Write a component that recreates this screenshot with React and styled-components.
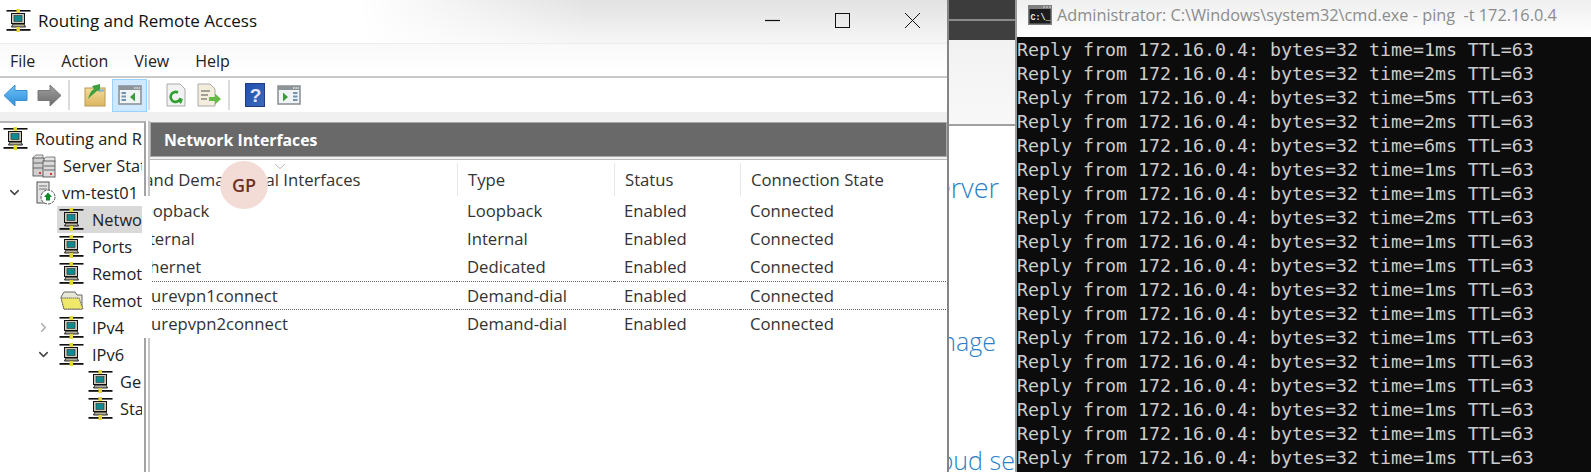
import React from "react";
import styled, { createGlobalStyle } from "styled-components";
import { ChevronDown, ChevronRight } from "lucide-react";

const GlobalStyle = createGlobalStyle`
  html, body {
    margin: 0;
    padding: 0;
    background: #fff;
    overflow: hidden;
  }
  * { box-sizing: border-box; }
`;

const Desktop = styled.div`
  position: relative;
  display: flex;
  width: 1591px;
  height: 472px;
  overflow: hidden;
  font-family: "Open Sans", "Noto Sans", sans-serif;
`;

/* ---------- routing window ---------- */

const RrasWindow = styled.div`
  display: flex;
  flex-direction: column;
  width: 949px;
  flex: none;
  background: #fff;
  border-right: 2px solid #858585;
`;

const TitleBar = styled.div`
  display: flex;
  align-items: center;
  height: 44px;
  flex: none;
  padding-left: 6px;
  padding-bottom: 3px;
  background:
    linear-gradient(90deg, #fff 38%, rgba(255, 255, 255, 0) 62%),
    linear-gradient(180deg, #e2e2e2, #f6f6f6);
  border-bottom: 1px solid #ececec;
`;

const TitleText = styled.div`
  margin-left: 7px;
  font-size: 17px;
  color: #111;
  flex: 1;
`;

const WinButton = styled.div`
  display: flex;
  justify-content: center;
  align-items: center;
  width: 70px;
  height: 38px;
  color: #111;
`;

const MenuBar = styled.div`
  display: flex;
  align-items: center;
  height: 34px;
  flex: none;
  padding: 2px 0 0 10px;
  gap: 26px;
  font-size: 16px;
  color: #222;
  background: linear-gradient(180deg, #f9f9f9, #fff);
  border-bottom: 2px solid #c9c9c9;
`;

const Toolbar = styled.div`
  display: flex;
  align-items: center;
  height: 34px;
  flex: none;
  background: #fff;
`;

const ToolSlot = styled.div`
  display: flex;
  justify-content: center;
  align-items: center;
  width: ${(p) => p.$w}px;
  margin-left: ${(p) => p.$ml || 0}px;
  height: 33px;
  flex: none;
  background: ${(p) => (p.$active ? "#cde8ff" : "transparent")};
  border: 1px solid ${(p) => (p.$active ? "#99d1ff" : "transparent")};
`;

const ToolSep = styled.div`
  width: 2px;
  height: 30px;
  flex: none;
  margin-left: ${(p) => p.$ml}px;
  background: #dcdcdc;
`;

const Band = styled.div`
  height: 9px;
  flex: none;
  background: #f0f0f0;
`;

const Panes = styled.div`
  display: flex;
  flex: 1;
  min-height: 0;
`;

const TreePane = styled.div`
  width: 146px;
  flex: none;
  padding-top: 2px;
  border-top: 2px solid #b5b5b5;
  border-right: 2px solid #a3a3a3;
  overflow: hidden;
`;

const TreeRow = styled.div`
  display: flex;
  align-items: center;
  width: 142px;
  height: 27px;
  padding-left: ${(p) => p.$indent}px;
  overflow: hidden;
  white-space: nowrap;
  font-size: 16.4px;
  color: #222;
  background: ${(p) => (p.$selected ? "linear-gradient(90deg, transparent 57px, #d9d9d9 57px)" : "none")};
`;

const Twisty = styled.span`
  display: flex;
  justify-content: center;
  width: 16px;
  margin-right: ${(p) => p.$mr}px;
  flex: none;
  color: ${(p) => p.$color || "#444"};
`;

const TreeLabel = styled.span`
  margin-left: ${(p) => p.$ml}px;
`;

const Splitter = styled.div`
  width: 4px;
  flex: none;
  background: #fff;
  border-right: 2px solid #c6c6c6;
`;

const DetailPane = styled.div`
  flex: 1;
  min-width: 0;
  display: flex;
  flex-direction: column;
  background: #f0f0f0;
`;

const PaneHeader = styled.div`
  display: flex;
  align-items: center;
  height: 35px;
  flex: none;
  margin-top: 1px;
  padding-left: 13px;
  background: #696969;
  border: 1px solid #a8a8a8;
  color: #fff;
  font-size: 15.8px;
  font-weight: 700;
`;

const ListArea = styled.div`
  flex: 1;
  margin-top: 2px;
  padding-top: 3px;
  background: #fff;
  border-top: 1px solid #b9b9b9;
  overflow: hidden;
`;

const Grid = styled.div`
  display: grid;
  grid-template-columns: 350px 157px 126px 206px;
  margin-left: -43px;
  width: 839px;
  font-size: 16.7px;
  color: #333;
`;

const HeadCell = styled.div`
  position: relative;
  display: flex;
  align-items: center;
  height: 33px;
  padding-left: ${(p) => (p.$first ? 0 : 10)}px;
  border-left: 1px solid ${(p) => (p.$first ? "transparent" : "#e8e8e8")};
  white-space: nowrap;
`;

const SortCaret = styled.svg`
  position: absolute;
  left: 166px;
  top: 0;
`;

const Row = styled.div`
  display: contents;
`;

const Cell = styled.div`
  display: flex;
  align-items: center;
  height: 28.4px;
  padding-left: ${(p) => (p.$first ? 27 : 10)}px;
  white-space: nowrap;
  border-top: ${(p) => (p.$focused ? "1px dotted #666" : "1px solid transparent")};
  border-bottom: ${(p) => (p.$focused ? "1px dotted #666" : "1px solid transparent")};
`;

const WhiteCover = styled.div`
  position: absolute;
  left: 142px;
  top: 196px;
  width: 10px;
  height: 142px;
  background: #fff;
`;

const Badge = styled.div`
  position: absolute;
  left: 220px;
  top: 161px;
  width: 48px;
  height: 48px;
  display: flex;
  align-items: center;
  justify-content: center;
  border-radius: 50%;
  background: #f3dcd6;
  color: #73301f;
  font-size: 18px;
  font-weight: 600;
`;

/* ---------- page behind ---------- */

const BackPage = styled.div`
  width: 66px;
  flex: none;
  display: flex;
  flex-direction: column;
  background: #fff;
  overflow: hidden;
`;

const BackNav = styled.div`
  height: 40px;
  flex: none;
  background: linear-gradient(180deg, #3c3c3c 19px, #8a8a8a 19px, #8a8a8a 21px, #3f3f3f 21px);
`;

const BackHero = styled.div`
  height: 86px;
  flex: none;
  background: linear-gradient(180deg, #f2f2f2, #f8f8f8);
  border-bottom: 2px solid #a0a0a0;
`;

const BackLine = styled.div`
  display: flex;
  justify-content: flex-end;
  flex: none;
  margin-top: ${(p) => p.$mt}px;
  margin-right: ${(p) => p.$mr}px;
  height: 34px;
  line-height: 34px;
  font-size: ${(p) => p.$size || 25}px;
  font-weight: 300;
  color: #2b7fc8;
  white-space: nowrap;
`;

/* ---------- console ---------- */

const CmdWindow = styled.div`
  flex: 1;
  min-width: 0;
  display: flex;
  flex-direction: column;
  border-left: 2px solid #9a9a9a;
`;

const CmdTitle = styled.div`
  display: flex;
  align-items: center;
  height: 37px;
  flex: none;
  padding: 0 0 8px 11px;
  background: linear-gradient(180deg, #efefef, #fff);
  color: #8c8c8c;
  font-size: 16.3px;
  white-space: pre;
  overflow: hidden;
`;

const CmdText = styled.span`
  margin-left: 5px;
`;

const CmdBody = styled.div`
  flex: 1;
  background: #0c0c0c;
  color: #cccccc;
  padding-top: 1px;
  font-family: "DejaVu Sans Mono", "Liberation Mono", monospace;
  font-size: 18.27px;
  line-height: 24px;
  white-space: pre;
  overflow: hidden;
`;

/* ---------- drawn icons ---------- */

const NetIcon = () => (
  <svg width="25" height="23" viewBox="0 0 25 23" style={{ flex: "none" }}>
    <rect x="0.5" y="1" width="24" height="1.6" fill="#111" />
    <rect x="10.5" y="0" width="3.5" height="4" fill="#e6d82c" />
    <rect x="5.5" y="4.5" width="13" height="10" fill="#cfcbb8" stroke="#111" />
    <rect x="8" y="6.5" width="8" height="6" fill="#0f8a90" stroke="#333" strokeWidth="0.6" />
    <path d="M7 15 H18 L19.5 18 H5.5 Z" fill="#b4b09c" stroke="#111" strokeWidth="0.9" />
    <rect x="0.5" y="20" width="24" height="1.8" fill="#111" />
    <rect x="10.5" y="18" width="3.5" height="5" fill="#e6d82c" />
  </svg>
);

const ServersIcon = () => (
  <svg width="24" height="24" viewBox="0 0 24 24" style={{ flex: "none" }}>
    <path d="M1 3.5 L4 1 H11 V5 H1 Z" fill="#e4e4e4" stroke="#555" strokeWidth="0.7" />
    <path d="M11 5.5 L14 3 H23 V7.5 H11 Z" fill="#e4e4e4" stroke="#555" strokeWidth="0.7" />
    <rect x="1" y="4" width="11" height="18" fill="#d0d0d0" stroke="#444" strokeWidth="0.8" />
    <rect x="11" y="7" width="12" height="16" fill="#dadada" stroke="#444" strokeWidth="0.8" />
    <path d="M1 9 H11 M1 14 H11 M12 12 H23 M12 16 H23" stroke="#666" strokeWidth="1" />
    <rect x="7" y="18" width="2" height="2" fill="#d33" />
    <rect x="18" y="19" width="2" height="2" fill="#d33" />
  </svg>
);

const VmIcon = () => (
  <svg width="24" height="24" viewBox="0 0 24 24" style={{ flex: "none" }}>
    <rect x="2" y="1" width="12" height="21" fill="#e2e2e2" stroke="#555" />
    <path d="M4 5 H12 M4 8 H12" stroke="#777" />
    <circle cx="13" cy="16" r="7" fill="#fff" stroke="#555" strokeDasharray="3 1" />
    <path d="M13 11.5 L17 16 H15 V19.5 H11 V16 H9 Z" fill="#0c8a2a" />
  </svg>
);

const FolderIcon = () => (
  <svg width="24" height="20" viewBox="0 0 24 20" style={{ flex: "none" }}>
    <path d="M1 6 L4 1 H15 L17 4 H22 V18 H4 Z" fill="#e8e8d8" stroke="#666" />
    <path d="M4 18 L1 7 H19 L23 18 Z" fill="#f0e86a" stroke="#666" strokeDasharray="1.5 0.6" />
  </svg>
);

const ArrowIcon = ({ dir, id, from, to, stroke }) => (
  <svg width="25" height="23" viewBox="0 0 25 23">
    <defs>
      <linearGradient id={id} x1="0" y1="0" x2="0" y2="1">
        <stop offset="0" stopColor={from} />
        <stop offset="1" stopColor={to} />
      </linearGradient>
    </defs>
    <path
      d="M1 11.5 L12 1 V6.5 H24 V16.5 H12 V22 Z"
      fill={`url(#${id})`}
      stroke={stroke}
      transform={dir === "right" ? "matrix(-1 0 0 1 25 0)" : undefined}
    />
  </svg>
);

const FolderUpIcon = () => (
  <svg width="22" height="24" viewBox="0 0 22 24">
    <defs>
      <linearGradient id="folderFill" x1="0" y1="0" x2="0" y2="1">
        <stop offset="0" stopColor="#f3dc9a" />
        <stop offset="1" stopColor="#dcb660" />
      </linearGradient>
    </defs>
    <rect x="1" y="5" width="20" height="18" fill="url(#folderFill)" stroke="#b89a50" />
    <path d="M4 16 C6 9 8 7 10 6 L8 3 L16 1 L16 9 L13.5 7.5 C11 10 8 12 4 16 Z" fill="#3fa03f" />
    <rect x="15" y="6.5" width="5" height="2" fill="#7ab2d8" />
  </svg>
);

const PanelIcon = ({ side }) => (
  <svg width="24" height="20" viewBox="0 0 24 20">
    <rect x="1" y="1" width="22" height="18" fill="#f1f3f5" stroke="#8d9499" strokeWidth="1.6" />
    <rect x="1" y="1" width="22" height="4" fill="#8d9499" />
    <path d="M16 3 H17.5 M18.5 3 H20 M20.8 3 H22" stroke="#e4e7ea" strokeWidth="1.4" />
    {side === "left" ? (
      <>
        <path d="M3.5 8 H8 M3.5 11.5 H8 M3.5 15 H8" stroke="#6f93b3" strokeWidth="2" />
        <path d="M17 7.5 V16.5 L12 12 Z" fill="#3c9a3c" />
      </>
    ) : (
      <>
        <path d="M6 7.5 V16.5 L11 12 Z" fill="#3c9a3c" />
        <path d="M16 8 H20.5 M16 11.5 H20.5 M16 15 H20.5" stroke="#6f93b3" strokeWidth="2" />
      </>
    )}
  </svg>
);

const RefreshIcon = () => (
  <svg width="20" height="24" viewBox="0 0 20 24">
    <path d="M1 1 H14 L19 6 V23 H1 Z" fill="#f2f2f2" stroke="#aaa" />
    <path d="M14.5 15 A5 5 0 1 1 12 9.5" fill="none" stroke="#2fa02f" strokeWidth="2.6" />
    <path d="M11 17 L17 16 L15 21 Z" fill="#2fa02f" />
  </svg>
);

const ExportIcon = () => (
  <svg width="24" height="24" viewBox="0 0 24 24">
    <path d="M1 1 H13 L18 6 V23 H1 Z" fill="#f3eddc" stroke="#aaa" />
    <path d="M4 8 H13 M4 12 H11 M4 16 H10" stroke="#555" strokeWidth="1.2" />
    <path d="M12 14 H18 V10.5 L24 16 L18 21.5 V18 H12 Z" fill="#66bb44" />
  </svg>
);

const HelpIcon = () => (
  <svg width="20" height="24" viewBox="0 0 20 24">
    <defs>
      <linearGradient id="helpFill" x1="0" y1="0" x2="1" y2="1">
        <stop offset="0" stopColor="#1f4fb0" />
        <stop offset="1" stopColor="#3d6bb8" />
      </linearGradient>
    </defs>
    <rect x="0.5" y="0.5" width="19" height="23" fill="url(#helpFill)" stroke="#1c3d80" />
    <text x="10.5" y="19" textAnchor="middle" fontFamily="Liberation Sans, sans-serif" fontWeight="700" fontSize="19" fill="#e8e6f8">?</text>
  </svg>
);

const CmdIcon = () => (
  <svg width="24" height="20" viewBox="0 0 24 20" style={{ flex: "none" }}>
    <rect x="0" y="0" width="24" height="20" fill="#7f7f7f" />
    <path d="M15 2 H17 M18 2 H20 M21 2 H23" stroke="#ddd" />
    <rect x="1.5" y="4" width="21" height="14.5" fill="#1c1c1c" />
    <text x="2.5" y="14.5" fontFamily="Liberation Mono, monospace" fontWeight="700" fontSize="8.4" fill="#eee">C:\_</text>
  </svg>
);

const MinGlyph = () => (
  <svg width="15" height="15" viewBox="0 0 15 15"><path d="M0 7.5 H15" stroke="#111" strokeWidth="1.2" /></svg>
);

const MaxGlyph = () => (
  <svg width="15" height="15" viewBox="0 0 15 15"><rect x="0.5" y="0.5" width="14" height="14" fill="none" stroke="#111" /></svg>
);

const CloseGlyph = () => (
  <svg width="15" height="15" viewBox="0 0 15 15"><path d="M0 0 L15 15 M15 0 L0 15" stroke="#111" /></svg>
);

const times = [1, 2, 5, 2, 6, 1, 1, 2, 1, 1, 1, 1, 1, 1, 1, 1, 1, 1];

const rows = [
  { name: "Loopback", type: "Loopback" },
  { name: "Internal", type: "Internal" },
  { name: "Ethernet", type: "Dedicated" },
  { name: "azurevpn1connect", type: "Demand-dial", focused: true },
  { name: "azurepvpn2connect", type: "Demand-dial" },
];

function App() {
  return (
    <>
      <GlobalStyle />
      <Desktop>
        <RrasWindow>
          <TitleBar>
            <NetIcon />
            <TitleText>Routing and Remote Access</TitleText>
            <WinButton><MinGlyph /></WinButton>
            <WinButton><MaxGlyph /></WinButton>
            <WinButton><CloseGlyph /></WinButton>
          </TitleBar>
          <MenuBar>
            <span>File</span>
            <span>Action</span>
            <span>View</span>
            <span>Help</span>
          </MenuBar>
          <Toolbar>
            <ToolSlot $w={27} $ml={2}><ArrowIcon id="backFill" from="#6cc0f5" to="#2f8fdc" stroke="#3a8fd0" /></ToolSlot>
            <ToolSlot $w={27} $ml={7}><ArrowIcon id="nextFill" dir="right" from="#a0a0a0" to="#6c6c6c" stroke="#777" /></ToolSlot>
            <ToolSep $ml={5} />
            <ToolSlot $w={24} $ml={13}><FolderUpIcon /></ToolSlot>
            <ToolSlot $w={35} $ml={5} $active><PanelIcon side="left" /></ToolSlot>
            <ToolSep $ml={1} />
            <ToolSlot $w={22} $ml={15}><RefreshIcon /></ToolSlot>
            <ToolSlot $w={26} $ml={9}><ExportIcon /></ToolSlot>
            <ToolSep $ml={6} />
            <ToolSlot $w={22} $ml={14}><HelpIcon /></ToolSlot>
            <ToolSlot $w={26} $ml={10}><PanelIcon side="right" /></ToolSlot>
          </Toolbar>
          <Band />
          <Panes>
            <TreePane>
              <TreeRow $indent={3}><NetIcon /><TreeLabel $ml={7}>Routing and Remote Access</TreeLabel></TreeRow>
              <TreeRow $indent={32}><ServersIcon /><TreeLabel $ml={7}>Server Status</TreeLabel></TreeRow>
              <TreeRow $indent={6}>
                <Twisty $mr={13}><ChevronDown size={15} strokeWidth={2.4} /></Twisty>
                <VmIcon />
                <TreeLabel $ml={3}>vm-test01 (local)</TreeLabel>
              </TreeRow>
              <TreeRow $indent={59} $selected><NetIcon /><TreeLabel $ml={8}>Network Interfaces</TreeLabel></TreeRow>
              <TreeRow $indent={59}><NetIcon /><TreeLabel $ml={8}>Ports</TreeLabel></TreeRow>
              <TreeRow $indent={59}><NetIcon /><TreeLabel $ml={8}>Remote Access Clients</TreeLabel></TreeRow>
              <TreeRow $indent={60}><FolderIcon /><TreeLabel $ml={8}>Remote Access Logging</TreeLabel></TreeRow>
              <TreeRow $indent={35}>
                <Twisty $color="#aaa" $mr={8}><ChevronRight size={15} strokeWidth={2.4} /></Twisty>
                <NetIcon />
                <TreeLabel $ml={8}>IPv4</TreeLabel>
              </TreeRow>
              <TreeRow $indent={35}>
                <Twisty $mr={8}><ChevronDown size={15} strokeWidth={2.4} /></Twisty>
                <NetIcon />
                <TreeLabel $ml={8}>IPv6</TreeLabel>
              </TreeRow>
              <TreeRow $indent={88}><NetIcon /><TreeLabel $ml={7}>General</TreeLabel></TreeRow>
              <TreeRow $indent={88}><NetIcon /><TreeLabel $ml={7}>Static Routes</TreeLabel></TreeRow>
            </TreePane>
            <Splitter />
            <DetailPane>
              <PaneHeader>Network Interfaces</PaneHeader>
              <ListArea>
                <Grid>
                  <HeadCell $first>
                    LAN and Demand Dial Interfaces
                    <SortCaret width="12" height="7" viewBox="0 0 12 7">
                      <path d="M1 1 L6 5.5 L11 1" fill="none" stroke="#b5b5b5" />
                    </SortCaret>
                  </HeadCell>
                  <HeadCell>Type</HeadCell>
                  <HeadCell>Status</HeadCell>
                  <HeadCell>Connection State</HeadCell>
                  {rows.map((r) => (
                    <Row key={r.name}>
                      <Cell $first $focused={r.focused}>{r.name}</Cell>
                      <Cell $focused={r.focused}>{r.type}</Cell>
                      <Cell $focused={r.focused}>Enabled</Cell>
                      <Cell $focused={r.focused}>Connected</Cell>
                    </Row>
                  ))}
                </Grid>
              </ListArea>
            </DetailPane>
          </Panes>
        </RrasWindow>
        <BackPage>
          <BackNav />
          <BackHero />
          <BackLine $mt={45} $mr={16} $size={27}>Windows Server</BackLine>
          <BackLine $mt={119} $mr={19}>Manage</BackLine>
          <BackLine $mt={85} $mr={-64}>Cloud services</BackLine>
        </BackPage>
        <CmdWindow>
          <CmdTitle>
            <CmdIcon />
            <CmdText>Administrator: C:\Windows\system32\cmd.exe - ping  -t 172.16.0.4</CmdText>
          </CmdTitle>
          <CmdBody>
            {times.map((t, i) => (
              <div key={i}>{`Reply from 172.16.0.4: bytes=32 time=${t}ms TTL=63`}</div>
            ))}
          </CmdBody>
        </CmdWindow>
        <WhiteCover />
        <Badge>GP</Badge>
      </Desktop>
    </>
  );
}

export default App;
